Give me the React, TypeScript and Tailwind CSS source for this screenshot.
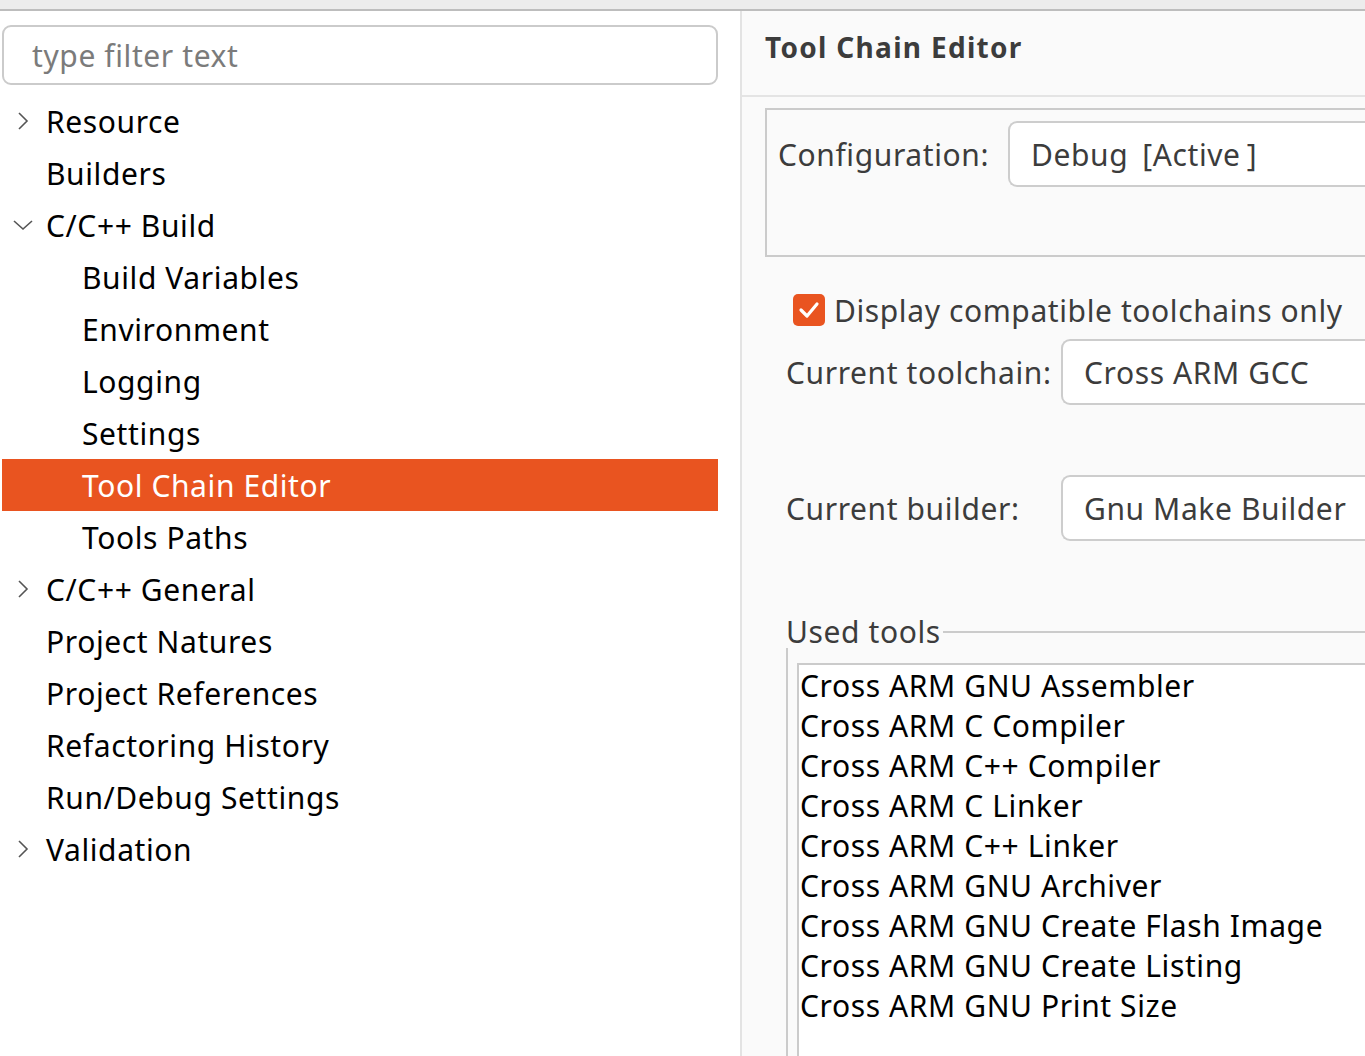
import { useState } from "react";

type TreeItem = { label: string; level: 1 | 2; toggle?: "open" | "closed" };

const tree: TreeItem[] = [
  { label: "Resource", level: 1, toggle: "closed" },
  { label: "Builders", level: 1 },
  { label: "C/C++ Build", level: 1, toggle: "open" },
  { label: "Build Variables", level: 2 },
  { label: "Environment", level: 2 },
  { label: "Logging", level: 2 },
  { label: "Settings", level: 2 },
  { label: "Tool Chain Editor", level: 2 },
  { label: "Tools Paths", level: 2 },
  { label: "C/C++ General", level: 1, toggle: "closed" },
  { label: "Project Natures", level: 1 },
  { label: "Project References", level: 1 },
  { label: "Refactoring History", level: 1 },
  { label: "Run/Debug Settings", level: 1 },
  { label: "Validation", level: 1, toggle: "closed" },
];

const usedTools = [
  "Cross ARM GNU Assembler",
  "Cross ARM C Compiler",
  "Cross ARM C++ Compiler",
  "Cross ARM C Linker",
  "Cross ARM C++ Linker",
  "Cross ARM GNU Archiver",
  "Cross ARM GNU Create Flash Image",
  "Cross ARM GNU Create Listing",
  "Cross ARM GNU Print Size",
];

const Chevron = ({ open }: { open: boolean }) =>
  open ? (
    <svg width="22" height="12" viewBox="0 0 22 12" className="ml-[10px]">
      <path d="M2 2 L11 10 L20 2" fill="none" stroke="#555" strokeWidth="1.6" />
    </svg>
  ) : (
    <svg width="12" height="20" viewBox="0 0 12 20" className="ml-[15px]">
      <path d="M2 2 L10 10 L2 18" fill="none" stroke="#555" strokeWidth="1.6" />
    </svg>
  );

const Combo = ({ children }: { children: React.ReactNode }) => (
  <div className="h-[66px] w-[600px] shrink-0 flex items-center rounded-l-[9px] border-2 border-r-0 border-[#cdcdcd] bg-white pl-[21px] text-[#3c3c3c]">
    {children}
  </div>
);

export default function App() {
  const [selected, setSelected] = useState("Tool Chain Editor");
  const [compatible, setCompatible] = useState(true);

  return (
    <div
      className="w-[1365px] h-[1056px] overflow-hidden flex flex-col bg-white text-[30px] tracking-[0.6px]"
      style={{ fontFamily: '"Noto Sans", "Open Sans", sans-serif' }}
    >
      <div className="h-[11px] shrink-0 bg-[#ececec] border-b-2 border-[#bdbdbd]" />
      <div className="flex flex-1 min-h-0">
        {/* left: page tree */}
        <aside className="w-[742px] shrink-0 bg-white border-r-2 border-[#e3e3e3] px-[2px] pt-[14px]">
          <div className="h-[60px] w-[716px] rounded-[9px] border-2 border-[#cbcbcb] flex items-center pl-[28px] text-[#7b7b7b]">
            type filter text
          </div>
          <ul className="mt-[10px] w-[716px]">
            {tree.map((item) => {
              const active = item.label === selected;
              return (
                <li
                  key={item.label}
                  onClick={() => setSelected(item.label)}
                  className={`h-[52px] flex items-center cursor-default ${
                    active ? "bg-[#e95420] text-white" : "text-black"
                  }`}
                >
                  <div className="w-[44px] shrink-0 flex items-center">
                    {item.toggle && <Chevron open={item.toggle === "open"} />}
                  </div>
                  <span className={item.level === 2 ? "pl-[36px]" : ""}>{item.label}</span>
                </li>
              );
            })}
          </ul>
        </aside>

        {/* right: tool chain editor page */}
        <main className="flex-1 min-w-0 overflow-hidden bg-[#fafafa] text-[#3c3c3c]">
          <div className="h-[86px] border-b-2 border-[#e4e4e4] flex items-center pl-[23px] pb-[12px]">
            <h1 className="font-bold text-[28px] tracking-[1.3px]">Tool Chain Editor</h1>
          </div>

          <div className="ml-[23px] mt-[11px] h-[149px] w-[700px] border-2 border-r-0 border-[#cbcbcb] pl-[11px] pt-[11px]">
            <div className="flex items-center">
              <span className="w-[230px] shrink-0">Configuration:</span>
              <Combo>
                <span>Debug</span>
                <span className="ml-[14px]">[Active</span>
                <span className="ml-[6px]">]</span>
              </Combo>
            </div>
          </div>

          <label className="mt-[37px] ml-[51px] flex items-center h-[32px] cursor-default">
            <span
              onClick={() => setCompatible(!compatible)}
              className={`w-[32px] h-[32px] shrink-0 rounded-[5px] flex items-center justify-center ${
                compatible ? "bg-[#e95420]" : "bg-white border-2 border-[#bbb]"
              }`}
            >
              {compatible && (
                <svg width="22" height="18" viewBox="0 0 22 18">
                  <path d="M3 9 L9 15 L19 3" fill="none" stroke="white" strokeWidth="3.2" strokeLinecap="round" strokeLinejoin="round" />
                </svg>
              )}
            </span>
            <span className="ml-[9px]">Display compatible toolchains only</span>
          </label>

          <div className="mt-[13px] ml-[44px] flex items-center">
            <span className="w-[275px] shrink-0">Current toolchain:</span>
            <Combo>Cross ARM GCC</Combo>
          </div>

          <div className="mt-[70px] ml-[44px] flex items-center">
            <span className="w-[275px] shrink-0">Current builder:</span>
            <Combo>Gnu Make Builder</Combo>
          </div>

          <div className="mt-[73px] ml-[44px] flex items-center h-[34px]">
            <span className="shrink-0 pr-[2px]">Used tools</span>
            <div className="flex-1 h-[2px] bg-[#cbcbcb] mt-[2px]" />
          </div>
          <div className="ml-[44px] border-l-2 border-[#cbcbcb] pl-[9px] pt-[15px] h-[500px]">
            <ul className="h-[500px] bg-white border-2 border-r-0 border-[#cbcbcb] text-black">
              {usedTools.map((t) => (
                <li key={t} className="h-[40px] flex items-center pl-[1px]">
                  {t}
                </li>
              ))}
            </ul>
          </div>
        </main>
      </div>
    </div>
  );
}
